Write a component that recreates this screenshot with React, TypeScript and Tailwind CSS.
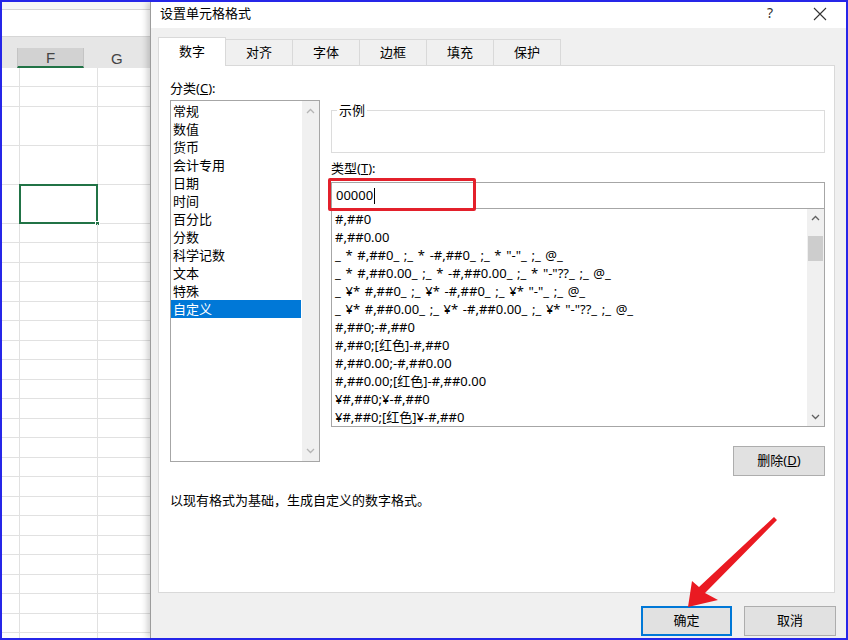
import React from "react";

const categories = [
  "常规",
  "数值",
  "货币",
  "会计专用",
  "日期",
  "时间",
  "百分比",
  "分数",
  "科学记数",
  "文本",
  "特殊",
  "自定义",
];

const formats = [
  "#,##0",
  "#,##0.00",
  '_ * #,##0_ ;_ * -#,##0_ ;_ * "-"_ ;_ @_',
  '_ * #,##0.00_ ;_ * -#,##0.00_ ;_ * "-"??_ ;_ @_',
  '_ ¥* #,##0_ ;_ ¥* -#,##0_ ;_ ¥* "-"_ ;_ @_',
  '_ ¥* #,##0.00_ ;_ ¥* -#,##0.00_ ;_ ¥* "-"??_ ;_ @_',
  "#,##0;-#,##0",
  "#,##0;[红色]-#,##0",
  "#,##0.00;-#,##0.00",
  "#,##0.00;[红色]-#,##0.00",
  "¥#,##0;¥-#,##0",
  "¥#,##0;[红色]¥-#,##0",
];

const tabs = ["数字", "对齐", "字体", "边框", "填充", "保护"];

// row heights of the sheet below the column header
const rowHeights = [19, 20, 39, 39, 39, 19, 20, 19, 20, 19, 20, 19, 20, 19, 20, 19, 20, 19, 20, 19, 20, 19, 20, 19, 20, 19, 20, 19];

function Chevron({ up, color }: { up?: boolean; color: string }) {
  return (
    <svg width="9" height="6" viewBox="0 0 9 6">
      <polyline
        points={up ? "1,5 4.5,1.5 8,5" : "1,1 4.5,4.5 8,1"}
        fill="none"
        stroke={color}
        strokeWidth="1.3"
      />
    </svg>
  );
}

function Sheet() {
  return (
    <div className="w-[148px] h-full bg-white flex flex-col shrink-0 overflow-hidden">
      <div className="h-[8px] shrink-0 bg-[#f7f7f7] border-b border-[#d6d6d6]" />
      <div className="h-[27px] shrink-0 bg-white border-b border-[#d6d6d6]" />
      <div className="h-[31px] shrink-0 bg-[#e6e6e6] flex flex-col justify-end">
        <div className="h-[20px] flex text-[15px] text-[#444] font-['Liberation_Sans',sans-serif]">
          <div className="w-[18px]" />
          <div className="w-[78px] bg-[#d2d2d2] border-l border-r border-[#c4c4c4] border-b-2 border-b-[#217346] flex items-center justify-center leading-none">
            F
          </div>
          <div className="w-[78px] flex items-center justify-center leading-none">G</div>
        </div>
      </div>
      {rowHeights.map((h, i) => (
        <div key={i} className="flex border-b border-[#e1e1e1] shrink-0" style={{ height: h }}>
          <div className="w-[18px] border-r border-[#e1e1e1]" />
          <div className="w-[78px] border-r border-[#e1e1e1] relative">
            {i === 4 && (
              <>
                <div className="absolute -left-[1px] -top-[1px] w-[79px] h-[40px] border-2 border-[#217346]" />
                <div className="absolute -right-[3px] -bottom-[3px] w-[5px] h-[5px] bg-[#217346] border border-white" />
              </>
            )}
          </div>
          <div className="flex-1" />
        </div>
      ))}
    </div>
  );
}

function Dialog() {
  return (
    <div className="w-[696px] h-full flex flex-col border-l border-[#9c9c9c] shadow-[-3px_0_6px_rgba(0,0,0,0.18)] z-10">
      {/* title bar */}
      <div className="h-[26px] bg-white flex items-start shrink-0">
        <div className="pl-[9px] pt-[1px] leading-[20px] text-[13px] text-black">设置单元格格式</div>
        <div className="ml-auto flex items-start pt-[1px]">
          <div className="w-[20px] text-center leading-[20px] text-[14px] text-[#333] mr-[33px]">?</div>
          <svg width="14" height="14" viewBox="0 0 14 14" className="mt-[4px] mr-[19px]">
            <path d="M1 1 L13 13 M13 1 L1 13" stroke="#333" strokeWidth="1.1" />
          </svg>
        </div>
      </div>

      {/* body */}
      <div className="flex-1 bg-[#f0f0f0] flex flex-col pl-[7px] pr-[10px]">
        {/* tabs */}
        <div className="flex items-end h-[37px] shrink-0">
          {tabs.map((t, i) =>
            i === 0 ? (
              <div
                key={t}
                className="w-[68px] h-[29px] bg-white border border-b-0 border-[#d9d9d9] flex items-center justify-center text-[13px] relative top-[1px] z-10"
              >
                {t}
              </div>
            ) : (
              <div
                key={t}
                className="w-[67px] h-[26px] bg-[#f0f0f0] border border-l-0 border-b-0 border-[#d9d9d9] flex items-center justify-center text-[13px]"
              >
                {t}
              </div>
            )
          )}
        </div>

        {/* panel */}
        <div className="w-[677px] h-[528px] bg-white border border-[#d9d9d9] pt-[14px] pl-[11px] shrink-0">
          <div className="flex items-start">
            {/* category column */}
            <div className="w-[150px]">
              <div className="leading-[16px] text-[13px] h-[20px]">
                分类(<span className="underline">C</span>):
              </div>
              <div className="h-[362px] border border-[#a6a6a6] flex">
                <div className="w-[130px] pt-[1px]">
                  {categories.map((c, i) => (
                    <div
                      key={c}
                      className={
                        "h-[18px] leading-[18px] text-[13px] pl-[2px] " +
                        (i === 11 ? "bg-[#0078d7] text-white" : "text-black")
                      }
                    >
                      {c}
                    </div>
                  ))}
                </div>
                <div className="ml-auto w-[17px] bg-[#f0f0f0] flex flex-col items-center justify-between py-[7px]">
                  <Chevron up color="#b5b5b5" />
                  <Chevron color="#b5b5b5" />
                </div>
              </div>
            </div>

            {/* right column */}
            <div className="w-[494px] ml-[11px] pt-[30px]">
              <div className="h-[43px] border border-[#dcdcdc] relative">
                <span className="absolute -top-[9px] left-[5px] bg-white px-[2px] leading-[16px] text-[13px]">示例</span>
              </div>
              <div className="mt-[7px] leading-[16px] text-[13px]">
                类型(<span className="underline">T</span>):
              </div>
              <div className="mt-[6px] h-[27px] border border-[#a6a6a6] flex items-center pl-[4px] text-[13px] relative">
                <span>00000</span>
                <span className="w-[1px] h-[16px] bg-black ml-[1px]" />
                <div className="absolute -left-[4px] -top-[5px] w-[148px] h-[33px] border-[3px] border-[#e3202b] rounded-[2px]" />
              </div>
              <div className="-mt-[1px] h-[219px] border border-[#a6a6a6] flex">
                <div className="flex-1 pt-[1px] pl-[3px] overflow-hidden">
                  {formats.map((f) => (
                    <div key={f} className="h-[18px] leading-[18px] text-[13px] whitespace-pre [word-spacing:1.3px]">
                      {f}
                    </div>
                  ))}
                </div>
                <div className="w-[17px] bg-[#f0f0f0] flex flex-col items-center">
                  <div className="h-[18px] flex items-center justify-center">
                    <Chevron up color="#606060" />
                  </div>
                  <div className="mt-[9px] w-[15px] h-[25px] bg-[#cdcdcd]" />
                  <div className="mt-auto h-[18px] flex items-center justify-center">
                    <Chevron color="#606060" />
                  </div>
                </div>
              </div>
              <div className="mt-[19px] flex justify-end">
                <div className="w-[92px] h-[30px] bg-[#e1e1e1] border border-[#adadad] flex items-center justify-center text-[13px]">
                  删除(<span className="underline">D</span>)
                </div>
              </div>
            </div>
          </div>
          <div className="mt-[16px] leading-[16px] text-[13px]">以现有格式为基础，生成自定义的数字格式。</div>
        </div>

        {/* buttons */}
        <div className="mt-[13px] flex justify-end gap-[12px]">
          <div className="w-[91px] h-[30px] bg-[#e1e1e1] border-2 border-[#0078d7] flex items-center justify-center text-[13px]">
            确定
          </div>
          <div className="w-[92px] h-[30px] bg-[#e1e1e1] border border-[#adadad] flex items-center justify-center text-[13px]">
            取消
          </div>
        </div>
      </div>
    </div>
  );
}

export default function App() {
  return (
    <div className="w-[848px] h-[640px] border-2 border-[#2626e8] flex overflow-hidden relative text-black font-['Noto_Sans','Noto_Sans_CJK_SC',sans-serif]">
      <Sheet />
      <Dialog />

      {/* red annotation arrow */}
      <svg className="absolute left-0 top-0 pointer-events-none z-20" width="848" height="640" viewBox="0 0 848 640">
        <polygon
          points="686,605 690,579 697,585 772,515 775,518 703,591 716,598"
          fill="#ea1a22"
        />
      </svg>
    </div>
  );
}
